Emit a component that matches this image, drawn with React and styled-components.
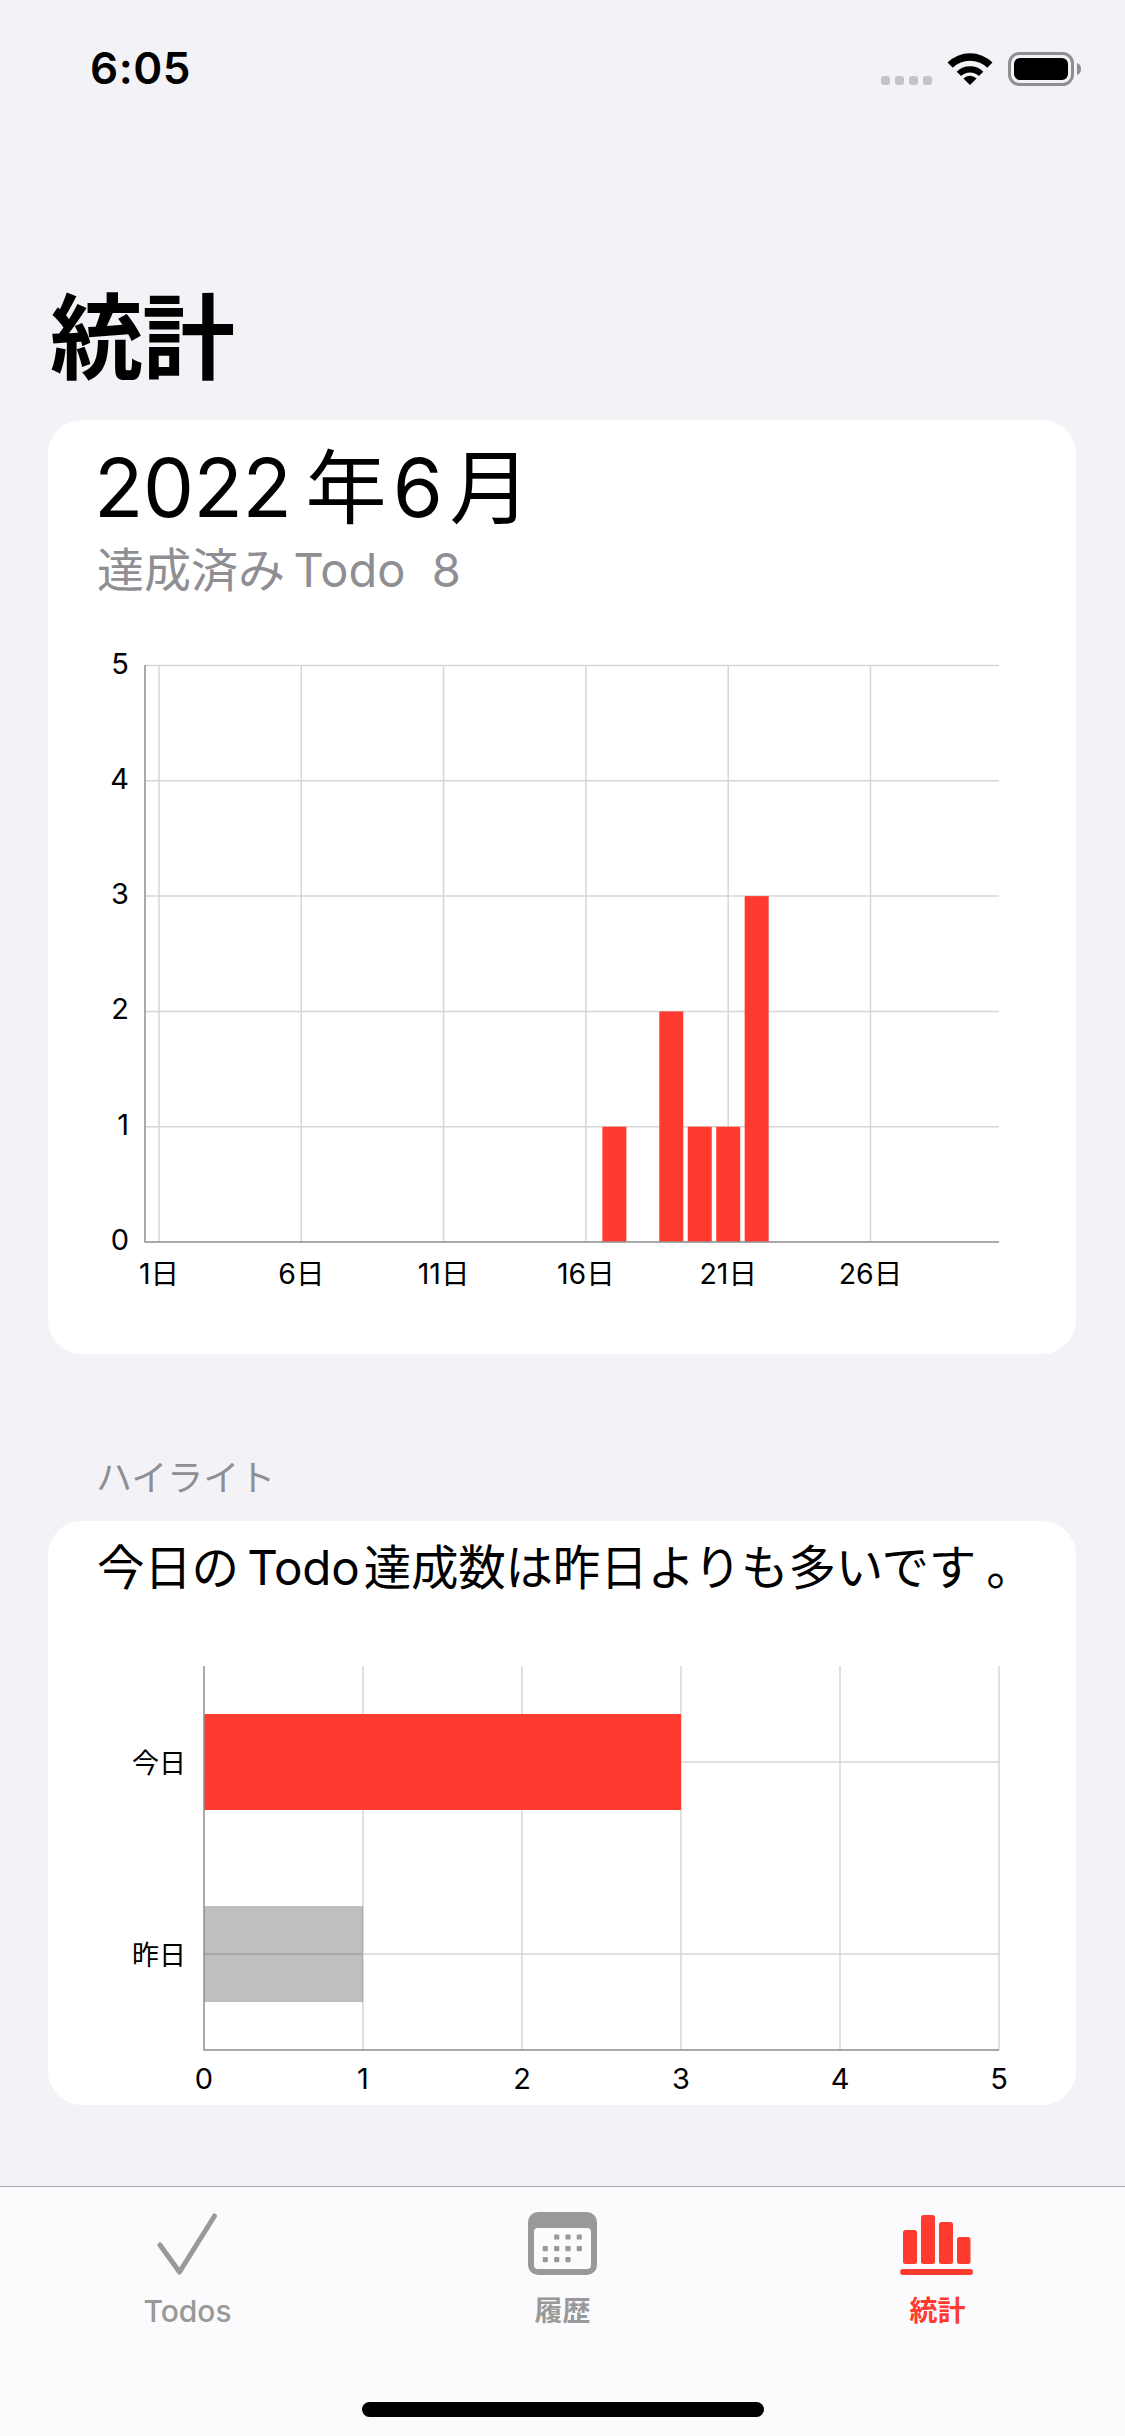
import React from "react";
import styled, { createGlobalStyle } from "styled-components";

const RED = "#ff3b30";
const FONT = `"Inter", "Noto Sans CJK JP", sans-serif`;

const Global = createGlobalStyle`
  html, body { margin: 0; padding: 0; background: #f2f2f7; }
  * { box-sizing: border-box; }
`;

const Screen = styled.div`
  width: 1125px;
  height: 2436px;
  display: flex;
  flex-direction: column;
  background: #f2f2f7;
  font-family: ${FONT};
  color: #000;
  overflow: hidden;
`;

const StatusBar = styled.div`
  height: 136px;
  padding: 46px 43px 0 90px;
  display: flex;
  justify-content: space-between;
  align-items: flex-start;
`;

const Time = styled.div`
  font-size: 44px;
  line-height: 44px;
  font-weight: 600;
  letter-spacing: 0.5px;
`;

const StatusIcons = styled.div`
  display: flex;
  align-items: flex-start;
  padding-top: 6px;
`;

const Content = styled.main`
  flex: 1;
  padding: 0 49px 0 48px;
  display: flex;
  flex-direction: column;
`;

const PageTitle = styled.h1`
  margin: 0 0 0 2px;
  height: 284px;
  padding-top: 143px;
  font-size: 93px;
  line-height: 118px;
  font-weight: 700;
  letter-spacing: -1px;
`;

const Card = styled.section`
  background: #fff;
  border-radius: 34px;
  overflow: hidden;
`;

const Header = styled.div`
  height: ${(p) => p.$h}px;
  padding-left: 49px;
`;

const Year = styled.div`
  margin-left: -3px;
  padding-top: 25px;
  height: 115px;
  font-size: 81px;
  line-height: 86px;
  font-weight: 400;
  letter-spacing: -0.5px;
  white-space: pre;
`;

const Sub = styled.div`
  font-size: 47px;
  line-height: 70px;
  color: #8e8e93;
  white-space: pre;
`;

const SectionLabel = styled.div`
  margin: 100px 0 19px 48px;
  font-size: 36px;
  line-height: 48px;
  color: #8e8e93;
`;

const Highlight = styled.div`
  padding-top: 17px;
  font-size: 47.5px;
  line-height: 60px;
  white-space: pre;
  letter-spacing: -0.2px;
`;

const FullStop = styled.span`
  padding-left: 10px;
`;

const Chart = styled.svg`
  display: block;
  width: 1028px;
  font-family: ${FONT};
`;

const TabBar = styled.nav`
  height: 250px;
  flex: none;
  background: #fbfbfd;
  border-top: 1.5px solid #a9a9ad;
  display: flex;
  flex-direction: column;
  align-items: center;
`;

const TabRow = styled.div`
  width: 100%;
  display: grid;
  grid-template-columns: repeat(3, 375px);
  padding-top: 25px;
`;

const Tab = styled.div`
  display: flex;
  flex-direction: column;
  align-items: center;
  color: ${(p) => (p.$active ? RED : "#999")};
`;

const TabIcon = styled.svg`
  display: block;
  height: 63px;
`;

const TabLabel = styled.span`
  margin-top: 19px;
  font-size: ${(p) => (p.$latin ? 30 : 28)}px;
  line-height: 34px;
  font-weight: ${(p) => (p.$latin ? 500 : 600)};
`;

const HomeIndicator = styled.div`
  margin-top: 74px;
  width: 402px;
  height: 15px;
  border-radius: 8px;
  background: #000;
`;

const GRID = "#d6d6d6";
const AXIS = "#8f8f8f";

const WifiDots = () => (
  <svg width="52" height="33" viewBox="882 52 52 33" style={{ marginRight: 14 }}>
    {[882, 896, 910, 924].map((x) => (
      <rect key={x} x={x} y="76" width="9" height="9" rx="3" fill="#c4c4c8" />
    ))}
  </svg>
);

const Wifi = () => (
  <svg width="46" height="34" viewBox="947.5 52 46 34" style={{ marginRight: 15 }}>
    <path d="M970.5 85 L963.9 78.4 A9.4 9.4 0 0 1 977.1 78.4 Z" fill="#000" />
    <path d="M957.2 71.7 A18.8 18.8 0 0 1 983.8 71.7 L979.4 76.1 A12.6 12.6 0 0 0 961.6 76.1 Z" fill="#000" />
    <path d="M948 62.5 A32 32 0 0 1 993 62.5 L987.7 67.8 A24.6 24.6 0 0 0 953.3 67.8 Z" fill="#000" />
  </svg>
);

const Battery = () => (
  <svg width="74" height="34" viewBox="1009 52 74 34">
    <rect x="1010.5" y="53.5" width="63" height="31" rx="10" fill="none" stroke="#8e8e93" strokeWidth="3" />
    <rect x="1015" y="58" width="54" height="22" rx="6" fill="#000" />
    <path d="M1078 63 C1081 64 1082 66 1082 69 C1082 72 1081 74 1078 75 Z" fill="#8e8e93" />
  </svg>
);

const BarsChart = () => {
  const day = (d) => 159 + (d - 1) * 28.46;
  const val = (v) => 1242 - v * 115.3;
  const bars = [[17, 1], [19, 2], [20, 1], [21, 1], [22, 3]];
  return (
    <Chart viewBox="48 640 1028 714" height="714">
      {[1, 6, 11, 16, 21, 26].map((d) => (
        <line key={d} x1={day(d)} x2={day(d)} y1="665" y2="1242" stroke={GRID} strokeWidth="1.5" />
      ))}
      {[1, 2, 3, 4, 5].map((v) => (
        <line key={v} x1="145" x2="999" y1={val(v)} y2={val(v)} stroke={GRID} strokeWidth="1.5" />
      ))}
      {bars.map(([d, v]) => (
        <rect key={d} x={day(d) - 12} y={val(v)} width="24" height={v * 115.3} fill={RED} />
      ))}
      <path d="M145 665 V1242 H999" fill="none" stroke={AXIS} strokeWidth="1.5" />
      {[0, 1, 2, 3, 4, 5].map((v) => (
        <text key={v} x="129" y={val(v) + 8} textAnchor="end" fontSize="29">{v}</text>
      ))}
      {[1, 6, 11, 16, 21, 26].map((d) => (
        <text key={d} x={day(d)} y="1284" textAnchor="middle" fontSize="28.5">{d}日</text>
      ))}
    </Chart>
  );
};

const CompareChart = () => {
  const xs = [204, 363, 522, 681, 840, 999];
  return (
    <Chart viewBox="48 1640 1028 465" height="465">
      {xs.slice(1).map((x) => (
        <line key={x} x1={x} x2={x} y1="1666" y2="2050" stroke={GRID} strokeWidth="1.5" />
      ))}
      {[1762, 1954].map((y) => (
        <line key={y} x1="204" x2="999" y1={y} y2={y} stroke={GRID} strokeWidth="1.5" />
      ))}
      <rect x="204" y="1714" width="477" height="96" fill={RED} />
      <rect x="204" y="1906" width="159" height="96" fill="#000" fillOpacity="0.25" />
      <path d="M204 1666 V2050 H999" fill="none" stroke={AXIS} strokeWidth="1.5" />
      <text x="186" y="1773" textAnchor="end" fontSize="27">今日</text>
      <text x="186" y="1965" textAnchor="end" fontSize="27">昨日</text>
      {xs.map((x, i) => (
        <text key={x} x={x} y="2089" textAnchor="middle" fontSize="29">{i}</text>
      ))}
    </Chart>
  );
};

const CheckIcon = () => (
  <TabIcon viewBox="151.5 2212 72 63" width="72">
    <path d="M159.5 2245 L179 2272 L214 2216" fill="none" stroke="currentColor" strokeWidth="5" strokeLinecap="round" strokeLinejoin="round" />
  </TabIcon>
);

const CalendarIcon = () => {
  const rows = [
    [2237, [556.7, 568, 579.3]],
    [2248.7, [545.3, 556.7, 568, 579.3]],
    [2259.7, [545.3, 556.7, 568]],
  ];
  return (
    <TabIcon viewBox="527 2212 71 63" width="71">
      <rect x="528" y="2212" width="69" height="63" rx="10" fill="currentColor" />
      <rect x="534" y="2228" width="57" height="41" rx="4" fill="#fbfbfd" />
      {rows.map(([y, cols]) =>
        cols.map((x) => (
          <rect key={`${x}-${y}`} x={x - 2.6} y={y - 2.6} width="5.2" height="5.2" rx="1.2" fill="currentColor" />
        ))
      )}
    </TabIcon>
  );
};

const StatsIcon = () => (
  <TabIcon viewBox="899 2212 77 63" width="77">
    <rect x="903" y="2230" width="14" height="34" rx="2.5" fill="currentColor" />
    <rect x="921" y="2215" width="14" height="49" rx="2.5" fill="currentColor" />
    <rect x="939" y="2222" width="14" height="42" rx="2.5" fill="currentColor" />
    <rect x="957" y="2237" width="13.5" height="27" rx="2.5" fill="currentColor" />
    <rect x="900" y="2269" width="73" height="6" rx="3" fill="currentColor" />
  </TabIcon>
);

export default function App() {
  return (
    <Screen>
      <Global />
      <StatusBar>
        <Time>6:05</Time>
        <StatusIcons>
          <WifiDots />
          <Wifi />
          <Battery />
        </StatusIcons>
      </StatusBar>
      <Content>
        <PageTitle>統計</PageTitle>
        <Card>
          <Header $h={220}>
            <Year>{"2022\u2009年\u200a6\u200a月"}</Year>
            <Sub>{"達成済み\u2009Todo  8"}</Sub>
          </Header>
          <BarsChart />
        </Card>
        <SectionLabel>ハイライト</SectionLabel>
        <Card>
          <Header $h={119}>
            <Highlight>{"今日の\u2009Todo\u200a達成数は昨日よりも多いです"}<FullStop>。</FullStop></Highlight>
          </Header>
          <CompareChart />
        </Card>
      </Content>
      <TabBar>
        <TabRow>
          <Tab><CheckIcon /><TabLabel $latin>Todos</TabLabel></Tab>
          <Tab><CalendarIcon /><TabLabel>履歴</TabLabel></Tab>
          <Tab $active><StatsIcon /><TabLabel>統計</TabLabel></Tab>
        </TabRow>
        <HomeIndicator />
      </TabBar>
    </Screen>
  );
}
